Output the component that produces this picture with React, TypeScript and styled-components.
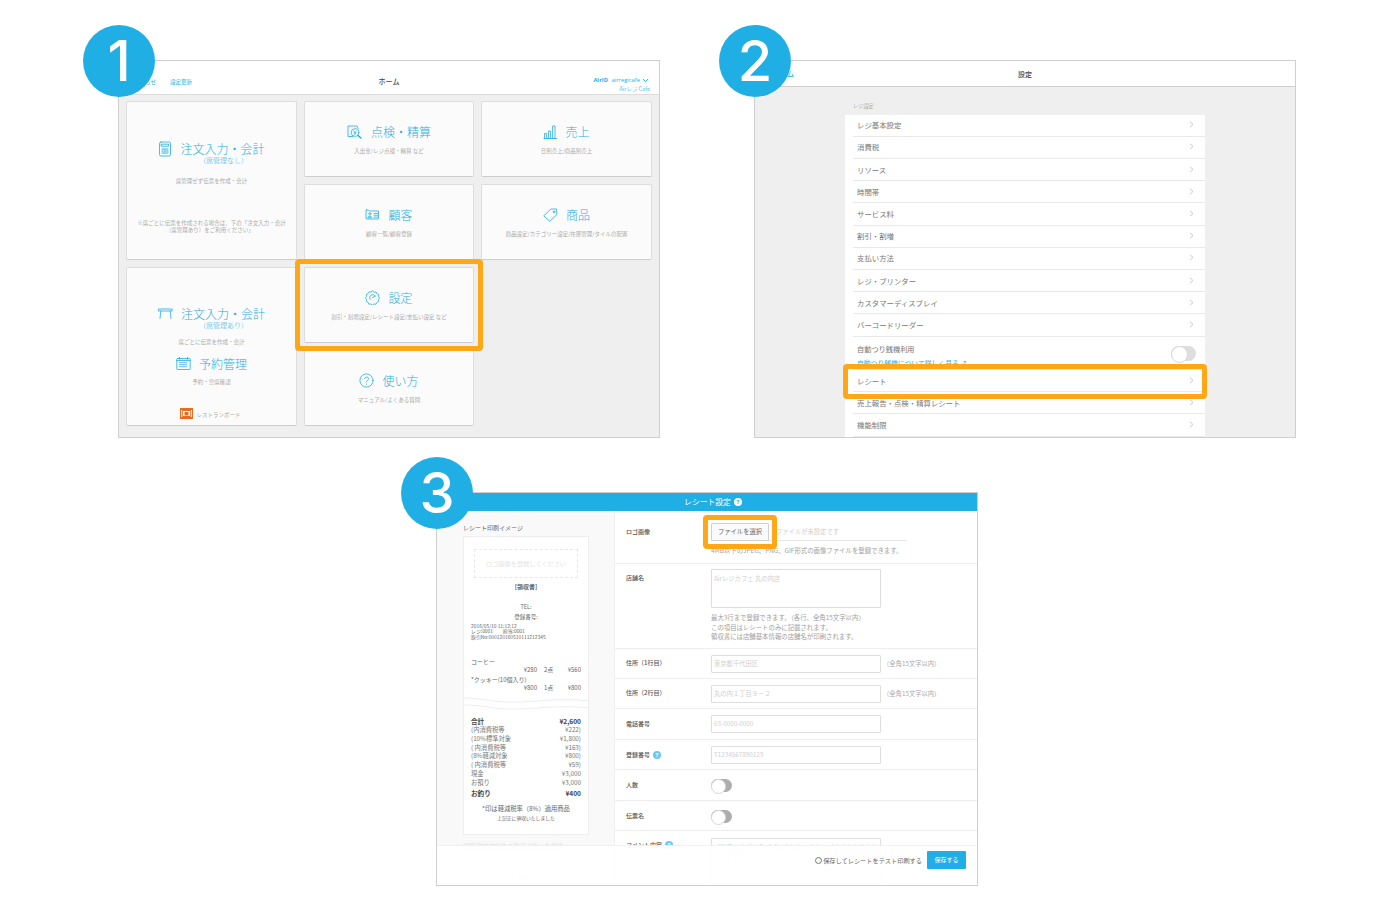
import React from "react";
import styled, { createGlobalStyle } from "styled-components";

const BLUE = "#1fafe5";
const ORANGE = "#ffa714";

const Global = createGlobalStyle`
  html, body { margin: 0; padding: 0; background: #fff; }
  body { font-family: "Noto Sans CJK JP", "Noto Sans", sans-serif; color: #555; }
  * { box-sizing: border-box; }
`;

const Page = styled.div`
  width: 1377px;
  height: 909px;
  padding-top: 60px;
  overflow: hidden;
`;
const TopRow = styled.div`
  display: flex;
  gap: 94px;
  padding-left: 118px;
`;
const BottomRow = styled.div`
  display: flex;
  padding-left: 436px;
  margin-top: 54px;
`;
const Panel = styled.section<{ $h: number }>`
  position: relative;
  width: 542px;
  height: ${(p) => p.$h}px;
  border: 1px solid #cfcfcf;
  background: #fff;
  display: flex;
  flex-direction: column;
`;
const StepBadge = styled.div`
  position: absolute;
  left: -36px;
  top: -36px;
  width: 72px;
  height: 72px;
  border-radius: 50%;
  background: ${BLUE};
  color: #fff;
  font: 500 56px/72px Inter, "Open Sans", sans-serif;
  text-align: center;
  z-index: 5;
`;
const Highlight = styled.div<{ $l: number; $t: number; $w: number; $h: number }>`
  position: absolute;
  left: ${(p) => p.$l}px;
  top: ${(p) => p.$t}px;
  width: ${(p) => p.$w}px;
  height: ${(p) => p.$h}px;
  border: 5px solid ${ORANGE};
  border-radius: 4px;
  z-index: 4;
  pointer-events: none;
`;

/* ---------- panel 1 ---------- */
const HomeHeader = styled.header`
  height: 34px;
  flex: none;
  display: grid;
  grid-template-columns: 1fr auto 1fr;
  align-items: end;
  padding: 0 9px 1px;
  border-bottom: 1px solid #dcdcdc;
`;
const HeaderLinks = styled.div`
  display: flex;
  gap: 14px;
  font-size: 5.5px;
  line-height: 9px;
  color: ${BLUE};
  padding: 0 0 6px 6px;
`;
const HomeTitle = styled.div`
  font-size: 7px;
  line-height: 10px;
  color: #444;
  font-weight: 500;
  padding-bottom: 7px;
`;
const Account = styled.div`
  justify-self: end;
  text-align: right;
  color: ${BLUE};
  font-size: 5.5px;
  line-height: 8px;
`;
const AccountId = styled.div`
  display: flex;
  align-items: center;
  justify-content: flex-end;
  gap: 2px;
  font-family: "Open Sans", sans-serif;
  font-size: 5.8px;
  margin-right: 1px;
  b { font-weight: 700; margin-right: 1.5px; }
`;
const AccountShop = styled.div`
  opacity: 0.75;
  font-size: 5.5px;
  margin-top: 1px;
`;
const HomeBody = styled.div`
  flex: 1;
  background: #efefef;
  padding: 6px 7px;
  display: grid;
  grid-template-columns: 171px 170px 171px;
  grid-auto-rows: 76px;
  gap: 7px;
`;
const Card = styled.div<{ $span?: number; $pad?: number }>`
  grid-row: span ${(p) => p.$span ?? 1};
  background: #fbfbfb;
  border: 1px solid #dddddd;
  border-bottom-color: #cdcdcd;
  border-radius: 2px;
  display: flex;
  flex-direction: column;
  align-items: center;
  padding-top: ${(p) => p.$pad ?? 21}px;
  position: relative;
`;
const CardHead = styled.div<{ $mt?: number }>`
  display: flex;
  align-items: center;
  gap: 8px;
  color: ${BLUE};
  font-size: 12px;
  line-height: 17px;
  font-weight: 300;
  margin-top: ${(p) => p.$mt ?? 0}px;
  svg { flex: none; }
`;
const CardSub = styled.div`
  color: ${BLUE};
  font-size: 7px;
  line-height: 8px;
  font-weight: 300;
  margin: -1px 0 0 24px;
`;
const CardDesc = styled.div<{ $mt?: number }>`
  color: #aaa;
  font-size: 5.5px;
  line-height: 7px;
  text-align: center;
  margin-top: ${(p) => p.$mt ?? 8}px;
`;
const BoardLink = styled.div`
  display: flex;
  align-items: flex-end;
  gap: 3px;
  color: #aaa;
  font-size: 5.5px;
  line-height: 8px;
  margin-top: 22px;
  margin-left: -2px;
`;

const iconProps = {
  fill: "none",
  stroke: BLUE,
  strokeWidth: 0.8,
  strokeLinecap: "round" as const,
  strokeLinejoin: "round" as const,
};
const CalcIcon = () => (
  <svg width="14" height="16" viewBox="0 0 14 16" {...iconProps}>
    <rect x="1.5" y="1" width="11" height="14" rx="1.5" />
    <path d="M3.5 3.2h7v2h-7z" />
    <path d="M4 8h1.4M6.3 8h1.4M8.6 8h1.4M4 10h1.4M6.3 10h1.4M8.6 10h1.4M4 12h1.4M6.3 12h1.4M8.6 12h1.4" strokeWidth="1" />
  </svg>
);
const InspectIcon = () => (
  <svg width="16" height="14" viewBox="0 0 16 14" {...iconProps}>
    <path d="M6 11.5H1V1h9l1.2 2.5" />
    <circle cx="8" cy="7.5" r="3.8" />
    <path d="M6.8 6l1.2 1.6L9.2 6M8 7.6v2M7 8h2" strokeWidth=".7" />
    <path d="M11 10.5l3 2.5" strokeWidth="1.4" />
  </svg>
);
const ChartIcon = () => (
  <svg width="14" height="14" viewBox="0 0 14 14" {...iconProps}>
    <path d="M1 13.5h12.5" />
    <path d="M1.5 13.5V8.5h2.2v5M5.4 13.5V6h2.2v7.5M9.6 13.5V1h2.4v12.5" />
  </svg>
);
const CardIcon = () => (
  <svg width="15" height="11" viewBox="0 0 15 11" {...iconProps}>
    <path d="M1.5 1h2l1 1h9v7.5a.5.5 0 01-.5.5H1.5a.5.5 0 01-.5-.5v-8a.5.5 0 01.5-.5z" />
    <circle cx="4.8" cy="4.8" r="1.1" />
    <path d="M2.8 8.3c.2-1.6 3.8-1.6 4 0zM9 4.5h3.5M9 6.3h3.5M9 8.1h3.5" />
  </svg>
);
const TagIcon = () => (
  <svg width="15" height="14" viewBox="0 0 15 14" {...iconProps}>
    <path d="M1 7.5L8 1h5.5l.5 5.5L7 13z" />
    <circle cx="11" cy="3.8" r=".9" />
  </svg>
);
const GearIcon = () => (
  <svg width="15" height="15" viewBox="0 0 15 15" {...iconProps}>
    <path d="M7.5 1l1.6 1.2 2-.2.8 1.8 1.8.9-.2 2 1 1.3-1 1.6.2 2-1.8.8-.9 1.8-2-.2-1.5 1-1.6-1-2 .2-.8-1.8-1.8-.9.2-2L.5 7.9l1-1.5-.2-2 1.8-.8.9-1.8 2 .2z" />
    <path d="M10.3 6.2A3 3 0 105 9.4" />
    <path d="M7.5 7.5l2.8-1.6" />
  </svg>
);
const TableIcon = () => (
  <svg width="15" height="11" viewBox="0 0 15 11" {...iconProps}>
    <path d="M.8 1h13.4v2H.8zM2.8 3L2 10.5M12.2 3l.8 7.5" />
  </svg>
);
const CalendarIcon = () => (
  <svg width="15" height="13" viewBox="0 0 15 13" {...iconProps}>
    <rect x=".8" y="1.5" width="13.4" height="11" rx=".6" />
    <path d="M3.5.3v2M11.5.3v2M.8 3.5h13.4" />
    <path d="M3.5 5.7h8M3.5 7.7h8M3.5 9.7h8" strokeDasharray="1 1" />
  </svg>
);
const HelpIcon = () => (
  <svg width="15" height="15" viewBox="0 0 15 15" {...iconProps}>
    <circle cx="7.5" cy="7.5" r="6.6" />
    <path d="M5.6 5.8c0-2.4 3.9-2.4 3.9 0 0 1.5-2 1.5-2 3.1" />
    <path d="M7.5 11v.2" />
  </svg>
);
const BoardLogo = () => (
  <svg width="13" height="11" viewBox="0 0 13 11">
    <rect width="13" height="11" fill="#ea6a1f" />
    <rect x="3" y="3" width="7" height="5" fill="#fff" />
    <rect x="4.5" y="4" width="4" height="3.5" fill="#ea6a1f" />
    <rect x="1.2" y="2" width="1" height="7" fill="#fff" />
    <rect x="10.8" y="2" width="1" height="7" fill="#fff" />
  </svg>
);

/* ---------- panel 2 ---------- */
const SettingsHeader = styled.header`
  height: 26px;
  flex: none;
  display: grid;
  grid-template-columns: 1fr auto 1fr;
  align-items: center;
  padding: 0 17px;
  border-bottom: 1px solid #cfcfcf;
  font-size: 7.2px;
`;
const BackLink = styled.div`
  color: ${BLUE};
  font-size: 7.5px;
`;
const SettingsTitle = styled.div`
  color: #444;
  font-size: 7px;
  font-weight: 500;
`;
const SettingsBody = styled.div`
  flex: 1;
  background: #efefef;
  overflow: hidden;
  display: flex;
  justify-content: center;
`;
const SettingsColumn = styled.div`
  width: 360px;
  padding-top: 13px;
`;
const SectionLabel = styled.div`
  font-size: 5.2px;
  line-height: 12px;
  color: #a8a8a8;
  padding-left: 8px;
  margin-bottom: 2.7px;
`;
const SettingsList = styled.div`
  background: #fff;
  padding-left: 8px;
`;
const SettingsRow = styled.div<{ $h?: number }>`
  height: ${(p) => p.$h ?? 22.2}px;
  border-bottom: 1px solid #e9e9e9;
  display: flex;
  align-items: center;
  justify-content: space-between;
  padding: 0 11px 1px 4px;
  font-size: 7.4px;
  color: #777;
  position: relative;
`;
const AutoText = styled.div`
  align-self: flex-start;
  padding-top: 7px;
  line-height: 11px;
  font-size: 7.2px;
`;
const AutoLink = styled.div`
  color: ${BLUE};
  font-size: 6.8px;
  line-height: 10px;
  margin-top: 3px;
`;
const Chevron = () => (
  <svg width="5" height="7" viewBox="0 0 5 7" fill="none" stroke="#c4c4c4" strokeWidth=".9">
    <path d="M1 .8l3 2.7-3 2.7" />
  </svg>
);
const Toggle = styled.div<{ $w: number; $h: number; $bg: string; $mr?: number; $mt?: number }>`
  width: ${(p) => p.$w}px;
  height: ${(p) => p.$h}px;
  border-radius: ${(p) => p.$h / 2}px;
  background: ${(p) => p.$bg};
  display: flex;
  margin: ${(p) => p.$mt ?? 0}px ${(p) => p.$mr ?? 0}px 0 0;
  &::before {
    content: "";
    width: ${(p) => p.$h}px;
    height: ${(p) => p.$h}px;
    border-radius: 50%;
    background: #fff;
    border: 1px solid #d8d8d8;
  }
`;

/* ---------- panel 3 ---------- */
const BlueHeader = styled.header`
  height: 18px;
  flex: none;
  background: ${BLUE};
  color: #fff;
  font-size: 7.8px;
  display: flex;
  align-items: center;
  justify-content: center;
  gap: 3px;
  padding: 0 0 1px 12px;
`;
const HeaderHelp = styled.span`
  width: 8px;
  height: 8px;
  border-radius: 50%;
  background: #fff;
  color: ${BLUE};
  font: 700 6px/8px "Open Sans", sans-serif;
  text-align: center;
`;
const Main = styled.div`
  flex: 1;
  display: flex;
  min-height: 0;
  overflow: hidden;
  position: relative;
`;
const PreviewCol = styled.div`
  width: 178px;
  flex: none;
  background: #f9f9f9;
  border-right: 1px solid #efefef;
  padding: 12px 26px 0;
  overflow: hidden;
`;
const PreviewLabel = styled.div`
  font-size: 6px;
  line-height: 9px;
  color: #666;
  margin-bottom: 4px;
`;
const Receipt = styled.div`
  width: 126px;
  background: #fff;
  border: 1px solid #eee;
  padding: 12px 7px 0 7px;
  color: #666;
  font-size: 5.5px;
  height: 299px;
`;
const LogoSlot = styled.div`
  width: 104px;
  margin-left: 3px;
  height: 29px;
  border: 1px dashed #e8e8e8;
  display: flex;
  align-items: center;
  justify-content: center;
  color: #e6e6e6;
  font-size: 6.2px;
`;
const Center = styled.div<{ $mt?: number; $bold?: boolean; $size?: number; $lh?: number }>`
  text-align: center;
  margin-top: ${(p) => p.$mt ?? 0}px;
  font-weight: ${(p) => (p.$bold ? 700 : 400)};
  font-size: ${(p) => p.$size ?? 5.5}px;
  line-height: ${(p) => p.$lh ?? 10}px;
`;
const Meta = styled.div`
  font-size: 4.9px;
  line-height: 5.7px;
  margin-top: 1px;
  white-space: pre;
`;
const ItemName = styled.div<{ $mt: number }>`
  margin-top: ${(p) => p.$mt}px;
  font-size: 6px;
  line-height: 8px;
`;
const ItemPrice = styled.div`
  display: grid;
  grid-template-columns: 1fr 22px 15px;
  text-align: left;
  line-height: 8px;
  font-size: 6px;
  span:first-child { text-align: right; margin-right: 7px; }
  span:last-child { text-align: right; }
`;
const Wave = styled.svg`
  display: block;
  width: 126px;
  height: 13px;
  margin: 5px 0 0 -7px;
`;
const Totals = styled.div`
  margin-top: 7px;
`;
const TotalRow = styled.div<{ $bold?: boolean; $lh?: number }>`
  display: flex;
  justify-content: space-between;
  font-size: ${(p) => (p.$bold ? 6.6 : 6.3)}px;
  font-weight: ${(p) => (p.$bold ? 700 : 400)};
  color: ${(p) => (p.$bold ? "#444" : "#777")};
  line-height: ${(p) => p.$lh ?? 8.8}px;
`;
const FadedNote = styled.div`
  font-size: 6.3px;
  line-height: 9px;
  color: #e0e0e0;
  margin-top: 7px;
`;
const FadedStamp = styled.div`
  font-size: 4.5px;
  text-align: center;
  color: #ddd;
  margin-top: 22px;
`;
const FormCol = styled.div`
  flex: 1;
  min-width: 0;
`;
const Field = styled.div<{ $h: number }>`
  height: ${(p) => p.$h}px;
  border-bottom: 1px solid #eeeeee;
  display: flex;
  align-items: flex-start;
  position: relative;
`;
const FieldLabel = styled.div<{ $mt: number }>`
  width: 96px;
  flex: none;
  padding-left: 11px;
  margin-top: ${(p) => p.$mt}px;
  font-size: 6px;
  line-height: 9px;
  font-weight: 500;
  color: #555;
  display: flex;
  align-items: center;
  gap: 3px;
`;
const Help = styled.span`
  width: 8px;
  height: 8px;
  border-radius: 50%;
  background: #6cc8ef;
  color: #fff;
  font: 700 6px/8px "Open Sans", sans-serif;
  text-align: center;
`;
const FieldBody = styled.div<{ $mt: number }>`
  margin-top: ${(p) => p.$mt}px;
  display: flex;
  flex-direction: column;
`;
const InputLine = styled.div`
  display: flex;
  align-items: center;
  gap: 2px;
`;
const FakeInput = styled.div<{ $h?: number }>`
  width: 170px;
  height: ${(p) => p.$h ?? 18}px;
  border: 1px solid #dedede;
  border-radius: 1px;
  background: #fff;
  color: #d0d0d0;
  font-size: 6.3px;
  line-height: ${(p) => (p.$h ? "9px" : "16px")};
  padding: ${(p) => (p.$h ? "4px 2px" : "0 2px")};
`;
const Hint = styled.div`
  font-size: 6.3px;
  color: #aaa;
  padding-bottom: 2px;
`;
const Notes = styled.div<{ $mt: number }>`
  margin-top: ${(p) => p.$mt}px;
  font-size: 6.4px;
  line-height: 9.5px;
  color: #a0a0a0;
`;
const FileLine = styled.div`
  display: flex;
  align-items: center;
  width: 196px;
  height: 18px;
  border-bottom: 1px solid #e6e6e6;
`;
const FileButton = styled.div`
  width: 58px;
  height: 18px;
  flex: none;
  border: 1px solid #cfcfcf;
  border-radius: 1px;
  background: #fafafa;
  color: #666;
  font-size: 6.3px;
  line-height: 16px;
  text-align: center;
`;
const FilePlaceholder = styled.div`
  margin-left: 7px;
  font-size: 6.3px;
  color: #cfcfcf;
`;
const Footer = styled.div`
  position: absolute;
  left: 0;
  right: 0;
  bottom: 0;
  height: 40px;
  background: rgba(255, 255, 255, 0.93);
  border-top: 1px solid #f0f0f0;
  display: flex;
  align-items: center;
  justify-content: flex-end;
  padding: 0 11px 11px 0;
  z-index: 2;
`;
const CheckLabel = styled.div`
  display: flex;
  align-items: center;
  font-size: 6.2px;
  color: #666;
  margin-right: 5px;
`;
const CheckCircle = styled.span`
  width: 7px;
  height: 7px;
  border: 1px solid #777;
  border-radius: 50%;
  margin-right: 1px;
`;
const SaveButton = styled.div`
  width: 39px;
  height: 18px;
  background: ${BLUE};
  border-radius: 1px;
  color: #fff;
  font-size: 6px;
  line-height: 17px;
  text-align: center;
`;

const settings = ["レジ基本設定", "消費税", "リソース", "時間帯", "サービス料", "割引・割増", "支払い方法", "レジ・プリンター", "カスタマーディスプレイ", "バーコードリーダー"];
const settings2 = ["レシート", "売上報告・点検・精算レシート", "機能制限"];
const totals = [
  ["(内消費税等", "¥222)"],
  ["(10%標準対象", "¥1,800)"],
  ["( 内消費税等", "¥163)"],
  ["(8%軽減対象", "¥800)"],
  ["( 内消費税等", "¥59)"],
  ["現金", "¥3,000"],
  ["お預り", "¥3,000"],
];

export default function App() {
  return (
    <Page>
      <Global />
      <TopRow>
        <Panel $h={378}>
          <StepBadge>1</StepBadge>
          <Highlight $l={176} $t={198} $w={188} $h={92} />
          <HomeHeader>
            <HeaderLinks>
              <span>お知らせ</span>
              <span>設定更新</span>
            </HeaderLinks>
            <HomeTitle>ホーム</HomeTitle>
            <Account>
              <AccountId>
                <b>AirID</b> airregicafe
                <svg width="7" height="5" viewBox="0 0 7 5" fill="none" stroke={BLUE} strokeWidth="1"><path d="M.8 1l2.7 2.6L6.2 1" /></svg>
              </AccountId>
              <AccountShop>Airレジ Cafe</AccountShop>
            </Account>
          </HomeHeader>
          <HomeBody>
            <Card $span={2} $pad={38}>
              <CardHead><CalcIcon /><span>注文入力・会計</span></CardHead>
              <CardSub>（席管理なし）</CardSub>
              <CardDesc $mt={14}>席管理せず伝票を作成・会計</CardDesc>
              <CardDesc $mt={35}>※席ごとに伝票を作成される場合は、下の「注文入力・会計<br />(席管理あり）をご利用ください」</CardDesc>
            </Card>
            <Card><CardHead><InspectIcon /><span>点検・精算</span></CardHead><CardDesc>入出金/レジ点検・精算 など</CardDesc></Card>
            <Card><CardHead><ChartIcon /><span>売上</span></CardHead><CardDesc>日別売上/商品別売上</CardDesc></Card>
            <Card><CardHead><CardIcon /><span>顧客</span></CardHead><CardDesc>顧客一覧/顧客登録</CardDesc></Card>
            <Card><CardHead><TagIcon /><span>商品</span></CardHead><CardDesc>商品設定/カテゴリー設定/在庫管理/タイルの配置</CardDesc></Card>
            <Card $span={2} $pad={37}>
              <CardHead><TableIcon /><span>注文入力・会計</span></CardHead>
              <CardSub>（席管理あり）</CardSub>
              <CardDesc $mt={10}>席ごとに伝票を作成・会計</CardDesc>
              <CardHead $mt={9}><CalendarIcon /><span>予約管理</span></CardHead>
              <CardDesc $mt={7}>予約・空席確認</CardDesc>
              <BoardLink><BoardLogo /><span>レストランボード</span></BoardLink>
            </Card>
            <Card><CardHead><GearIcon /><span>設定</span></CardHead><CardDesc>割引・割増設定/レシート設定/支払い設定 など</CardDesc></Card>
            <div />
            <Card><CardHead><HelpIcon /><span>使い方</span></CardHead><CardDesc>マニュアル/よくある質問</CardDesc></Card>
          </HomeBody>
        </Panel>

        <Panel $h={378}>
          <StepBadge>2</StepBadge>
          <Highlight $l={88} $t={303} $w={364} $h={35} />
          <SettingsHeader>
            <BackLink>ホーム</BackLink>
            <SettingsTitle>設定</SettingsTitle>
            <div />
          </SettingsHeader>
          <SettingsBody>
            <SettingsColumn>
              <SectionLabel>レジ設定</SectionLabel>
              <SettingsList>
                {settings.map((s) => (
                  <SettingsRow key={s}><span>{s}</span><Chevron /></SettingsRow>
                ))}
                <SettingsRow $h={33.5}>
                  <AutoText>
                    自動つり銭機利用
                    <AutoLink>自動つり銭機について詳しく見る ↗</AutoLink>
                  </AutoText>
                  <Toggle $w={25} $h={15} $bg="#dedede" $mr={-2} $mt={3} />
                </SettingsRow>
                {settings2.map((s) => (
                  <SettingsRow key={s}><span>{s}</span><Chevron /></SettingsRow>
                ))}
              </SettingsList>
            </SettingsColumn>
          </SettingsBody>
        </Panel>
      </TopRow>

      <BottomRow>
        <Panel $h={394}>
          <StepBadge>3</StepBadge>
          <Highlight $l={266} $t={22} $w={74} $h={34} />
          <BlueHeader>レシート設定<HeaderHelp>?</HeaderHelp></BlueHeader>
          <Main>
            <PreviewCol>
              <PreviewLabel>レシート印刷イメージ</PreviewLabel>
              <Receipt>
                <LogoSlot>ロゴ画像を登録してください</LogoSlot>
                <Center $mt={4} $bold $size={6} $lh={9.5}>[領収書]</Center>
                <Center $mt={10}>TEL:</Center>
                <Center>登録番号:</Center>
                <Meta>{"2016/05/10 11:12:12\nレジ:0001　　担当:0001\n取引No:000120160510111212345"}</Meta>
                <ItemName $mt={18}>コーヒー</ItemName>
                <ItemPrice><span>¥280</span><span>2点</span><span>¥560</span></ItemPrice>
                <ItemName $mt={2}>*クッキー(10個入り)</ItemName>
                <ItemPrice><span>¥800</span><span>1点</span><span>¥800</span></ItemPrice>
                <Wave viewBox="0 0 126 13" fill="none" stroke="#e8e8e8" strokeWidth=".8">
                  <path d="M0 1c20 0 30 5 55 4S95 1 126 4" />
                  <path d="M0 8c20 0 30 5 55 4S95 8 126 11" />
                </Wave>
                <Totals>
                  <TotalRow $bold $lh={9.4}><span>合計</span><span>¥2,600</span></TotalRow>
                  {totals.map(([a, b], i) => (
                    <TotalRow key={i}><span>{a}</span><span>{b}</span></TotalRow>
                  ))}
                  <TotalRow $bold $lh={11}><span>お釣り</span><span>¥400</span></TotalRow>
                </Totals>
                <Center $mt={5} $size={6.3} $lh={9.5}>*印は軽減税率（8%）適用商品</Center>
                <Center $size={4.8} $lh={9.5}>上記正に領収いたしました</Center>
              </Receipt>
              <FadedNote>印紙税納付対象の取引があった場合</FadedNote>
              <FadedStamp>上記正に領収いたしました</FadedStamp>
            </PreviewCol>
            <FormCol>
              <Field $h={53}>
                <FieldLabel $mt={16}>ロゴ画像</FieldLabel>
                <FieldBody $mt={12}>
                  <FileLine>
                    <FileButton>ファイルを選択</FileButton>
                    <FilePlaceholder>ファイルが未設定です</FilePlaceholder>
                  </FileLine>
                  <Notes $mt={5}>4MB以下のJPEG、PNG、GIF形式の画像ファイルを登録できます。</Notes>
                </FieldBody>
              </Field>
              <Field $h={85}>
                <FieldLabel $mt={9}>店舗名</FieldLabel>
                <FieldBody $mt={5}>
                  <FakeInput $h={39}>Airレジカフェ 丸の内店</FakeInput>
                  <Notes $mt={5}>最大3行まで登録できます。（各行、全角15文字以内）<br />この項目はレシートのみに記載されます。<br />領収書には店舗基本情報の店舗名が印刷されます。</Notes>
                </FieldBody>
              </Field>
              <Field $h={30}>
                <FieldLabel $mt={9}>住所（1行目）</FieldLabel>
                <FieldBody $mt={6}><InputLine><FakeInput>東京都千代田区</FakeInput><Hint>（全角15文字以内）</Hint></InputLine></FieldBody>
              </Field>
              <Field $h={30}>
                <FieldLabel $mt={9}>住所（2行目）</FieldLabel>
                <FieldBody $mt={6}><InputLine><FakeInput>丸の内１丁目９－２</FakeInput><Hint>（全角15文字以内）</Hint></InputLine></FieldBody>
              </Field>
              <Field $h={31}>
                <FieldLabel $mt={10}>電話番号</FieldLabel>
                <FieldBody $mt={6}><FakeInput>03-0000-0000</FakeInput></FieldBody>
              </Field>
              <Field $h={30}>
                <FieldLabel $mt={10}>登録番号<Help>?</Help></FieldLabel>
                <FieldBody $mt={6}><FakeInput>T1234567890123</FakeInput></FieldBody>
              </Field>
              <Field $h={31}>
                <FieldLabel $mt={10}>人数</FieldLabel>
                <FieldBody $mt={9}><Toggle $w={21} $h={13} $bg="#adadad" /></FieldBody>
              </Field>
              <Field $h={30}>
                <FieldLabel $mt={10}>伝票名</FieldLabel>
                <FieldBody $mt={9}><Toggle $w={21} $h={13} $bg="#adadad" /></FieldBody>
              </Field>
              <Field $h={60}>
                <FieldLabel $mt={9}>コメント内容<Help>?</Help></FieldLabel>
                <FieldBody $mt={7}><FakeInput $h={50}>ご利用ありがとうございました。またのご来店をお待ちしております。</FakeInput></FieldBody>
              </Field>
            </FormCol>
            <Footer>
              <CheckLabel><CheckCircle />保存してレシートをテスト印刷する</CheckLabel>
              <SaveButton>保存する</SaveButton>
            </Footer>
          </Main>
        </Panel>
      </BottomRow>
    </Page>
  );
}
